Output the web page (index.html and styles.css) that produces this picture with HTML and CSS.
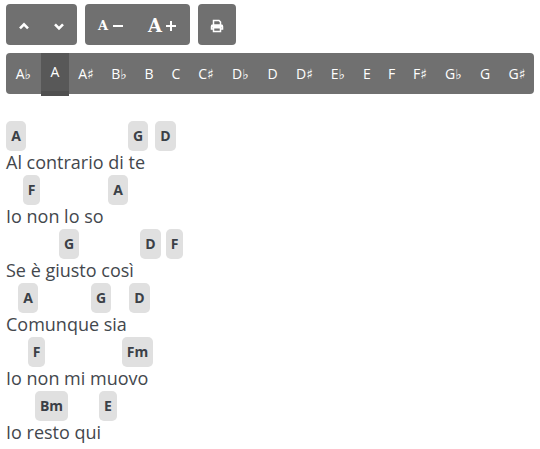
FILE: index.html
```html
<!DOCTYPE html>
<html lang="it">
<head>
<meta charset="utf-8">
<title>Accordi</title>
<link rel="stylesheet" href="styles.css">
</head>
<body>
<div class="toolbar">
  <div class="group scroll">
    <svg viewBox="0 0 71 41"><path d="M14 24.300l4-4 4 4M49 20.300l4 4 4-4" fill="none" stroke="#fff" stroke-width="2.600"/></svg>
  </div>
  <div class="group sizes">
    <span class="letter small">A</span><svg class="sign minus" viewBox="0 0 10 12"><path d="M0 6h10" stroke="#fff" stroke-width="2"/></svg>
    <span class="letter big">A</span><svg class="sign plus" viewBox="0 0 10 12"><path d="M0 6h10M5 1v10" stroke="#fff" stroke-width="2"/></svg>
  </div>
  <div class="group print">
    <svg viewBox="0 0 38 41"><path d="M15.500 21v-4.500h5.500l1.500 1.500v3M15.500 25h-2v-2.500q0-1.500 1.500-1.500h8q1.500 0 1.500 1.500V25h-2M15.500 23.800h7v3.700h-7z" fill="none" stroke="#fff" stroke-width="1.500"/><path d="M13.500 21h11v2.500h-11z" fill="#fff"/></svg>
  </div>
</div>
<div class="keys">
  <span>A♭</span><span class="active">A</span><span>A♯</span><span>B♭</span><span>B</span><span>C</span><span>C♯</span><span>D♭</span><span>D</span><span>D♯</span><span>E♭</span><span>E</span><span>F</span><span>F♯</span><span>G♭</span><span>G</span><span>G♯</span>
</div>
<main class="song">
  <div class="chords l1"><b>A</b><b>G</b><b>D</b></div>
  <p><span class="t1">Al contrario di te</span></p>
  <div class="chords l2"><b>F</b><b>A</b></div>
  <p><span class="t2">Io non lo so</span></p>
  <div class="chords l3"><b>G</b><b>D</b><b>F</b></div>
  <p><span class="t3">Se è giusto così</span></p>
  <div class="chords l4"><b>A</b><b>G</b><b>D</b></div>
  <p><span class="t4">Comunque sia</span></p>
  <div class="chords l5"><b>F</b><b>Fm</b></div>
  <p><span class="t5">Io non mi muovo</span></p>
  <div class="chords l6"><b>Bm</b><b>E</b></div>
  <p><span class="t6">Io resto qui</span></p>
</main>
</body>
</html>
```
FILE: styles.css
```css
* { box-sizing: border-box; }
body { margin: 0; padding: 4px 6px 0; height: 449px; overflow: hidden; background: #fff; font-family: "Open Sans", "DejaVu Sans", sans-serif; color: #43474d; }
.toolbar { display: flex; gap: 8px; height: 41px; }
.group { background: #707070; border-radius: 4px; height: 41px; display: flex; align-items: center; color: #fff; }
.group svg { display: block; flex: none; }
.scroll { width: 71px; }
.scroll svg { width: 71px; height: 41px; }
.sizes { width: 105px; padding-left: 13px; }
.letter { font-family: "DejaVu Serif", serif; font-weight: bold; line-height: 20px; flex: none; }
.small { font-size: 13px; width: 11px; margin-top: 2px; }
.big { font-size: 18px; width: 14px; margin-left: 25px; margin-top: 2px; }
.sign { width: 10px; height: 12px; margin-left: 4px; margin-top: 2px; }
.print { width: 38px; }
.print svg { width: 38px; height: 41px; }
.keys { display: grid; grid-template-columns: 35px 28px 34px 32px 28px 26px 34px 35px 29px 35px 32px 26px 23px 34px 33px 30px 34px; height: 41px; margin-top: 8px; background: #707070; border-radius: 4px; color: #fff; font-size: 14px; line-height: 41px; text-align: center; white-space: nowrap; }
.keys .active { background: #585858; border-bottom: 5px solid #505050; line-height: 38px; }
.song { margin-top: 27px; }
.chords { display: flex; height: 30px; }
.chords b { flex: none; height: 30px; padding: 0 6px; border-radius: 5px; background: #e0e0e0; color: #3b4047; font-size: 14px; line-height: 30px; font-weight: 700; text-align: center; }
.song p { margin: 0; height: 24px; font-size: 18px; line-height: 22px; white-space: nowrap; }
.l1 { display: grid; grid-template-columns: 20px 20px 21px; }
.l1 b:nth-child(2) { margin-left: 0; }
.chords { display: grid; }
.chords b { padding: 0; }
.l1 { grid-template-columns: 20px 102px 20px 7px 21px; }
.l1 b:nth-child(2) { grid-column: 3; }
.l1 b:nth-child(3) { grid-column: 5; }
.l2 { grid-template-columns: 17px 68px 20px; padding-left: 17px; }
.l3 { grid-template-columns: 20px 61px 21px 5px 17px; padding-left: 53px; }
.l4 { grid-template-columns: 20px 53px 20px 18px 21px; padding-left: 12px; }
.l5 { grid-template-columns: 17px 77px 31px; padding-left: 22px; }
.l6 { grid-template-columns: 33px 31px 18px; padding-left: 29px; }
.chords b:nth-child(2) { grid-column: 3; }
.chords b:nth-child(3) { grid-column: 5; }
```
